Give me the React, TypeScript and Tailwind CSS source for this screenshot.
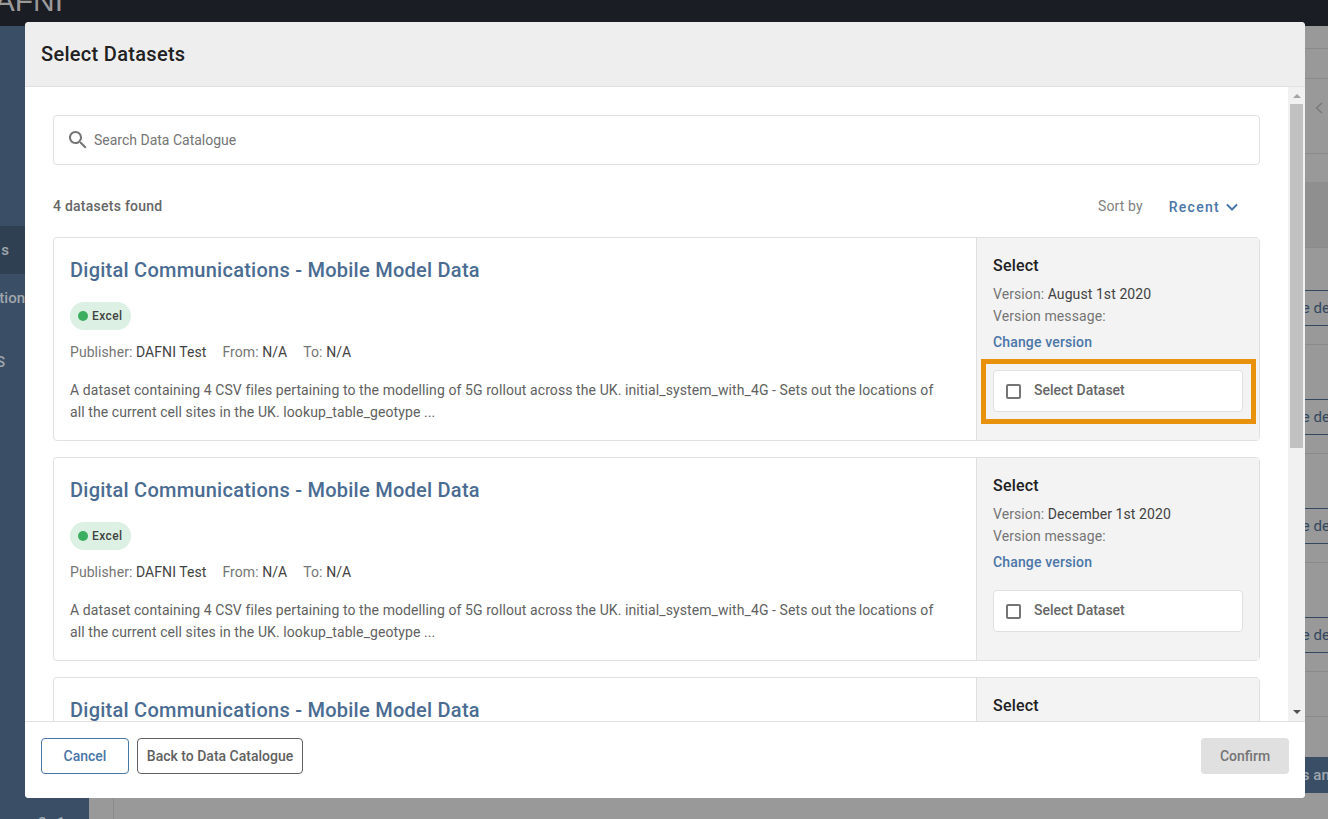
const versions = ['August 1st 2020', 'December 1st 2020', 'March 1st 2020'];

function SearchIcon() {
  return (
    <svg viewBox="0 0 24 24" className="h-6 w-6 shrink-0 fill-[#757575]">
      <path d="M15.5 14h-.79l-.28-.27C15.41 12.59 16 11.11 16 9.5 16 5.91 13.09 3 9.5 3S3 5.91 3 9.5 5.91 16 9.5 16c1.61 0 3.09-.59 4.23-1.57l.27.28v.79l5 4.99L20.49 19l-4.99-5zm-6 0C7.01 14 5 11.99 5 9.5S7.01 5 9.5 5 14 7.01 14 9.5 11.99 14 9.5 14z" />
    </svg>
  );
}

function DatasetCard({ version, highlighted }: { version: string; highlighted?: boolean }) {
  return (
    <div className="flex h-[204px] shrink-0 rounded border border-[#e0e0e0]">
      <div className="w-[922px] shrink-0 pt-[18px] pr-[30px] pl-4">
        <h2 className="text-[20px] leading-[28px] font-medium tracking-[0.25px] text-[#4a6b92]">
          Digital Communications - Mobile Model Data
        </h2>
        <div className="mt-[18px] flex h-7 w-[61px] items-center rounded-full bg-[#dcf1e3] pl-2">
          <span className="h-2.5 w-2.5 rounded-full bg-[#3cae60]" />
          <span className="ml-1 text-[12px] leading-4 font-medium tracking-[0.4px] text-[#424242]">Excel</span>
        </div>
        <div className="mt-[11px] flex h-[22px] items-center gap-4 text-[14px] tracking-[0.07px] text-[#757575]">
          <span>
            Publisher: <span className="text-[#424242]">DAFNI Test</span>
          </span>
          <span>
            From: <span className="text-[#424242]">N/A</span>
          </span>
          <span>
            To: <span className="text-[#424242]">N/A</span>
          </span>
        </div>
        <p className="mt-4 text-[14px] leading-[22px] tracking-[0.09px] text-[#616161]">
          A dataset containing 4 CSV files pertaining to the modelling of 5G rollout across the UK. initial_system_with_4G - Sets out the locations of all the current cell sites in the UK. lookup_table_geotype ...
        </p>
      </div>
      <div className="flex-1 border-l border-[#e0e0e0] bg-[#f3f3f3] pt-[17px] pr-4 pl-4">
        <h3 className="text-[16px] leading-[22px] font-medium tracking-[0.2px] text-[#212121]">Select</h3>
        <p className="mt-[6px] text-[14px] leading-[22px] tracking-[0.08px] text-[#757575]">
          Version: <span className="text-[#424242]">{version}</span>
        </p>
        <p className="text-[14px] leading-[22px] tracking-[0.1px] text-[#757575]">Version message:</p>
        <a className="mt-[4px] block text-[14px] leading-[22px] font-medium tracking-[0.15px] text-[#4a76a8]">Change version</a>
        <div className="relative mt-[17px] flex h-[42px] items-center rounded border border-[#e0e0e0] bg-white pl-[12px]">
          <span className="h-[15px] w-[15px] rounded-[2px] border-2 border-[#757575]" />
          <span className="mb-[2px] ml-[13px] text-[14px] leading-[20px] font-medium text-[#666666]">Select Dataset</span>
          {highlighted && (
            <div className="absolute -top-[12px] -right-[14px] -bottom-[13px] -left-[13px] border-[5px] border-[#e8910c]" />
          )}
        </div>
      </div>
    </div>
  );
}

function DetailsRow({ first }: { first?: boolean }) {
  return (
    <div className={first ? 'h-[97px] border-b border-[#8a8a8a] pt-[42px]' : 'h-[109px] border-b border-[#8a8a8a] pt-[54px]'}>
      <div className="ml-[1168px] h-9 w-[200px] border-y border-[#33485f] pl-[3px] text-[15px] leading-[34px] text-[#33485f]">
        See details
      </div>
    </div>
  );
}

export default function App() {
  return (
    <div className="relative h-[819px] w-[1328px] overflow-hidden bg-[#999999] font-['Roboto',sans-serif]">
      <header className="h-[26px] overflow-hidden bg-[#1a1d23]">
        <div className="-mt-[14px] -ml-[27px] font-['Liberation_Sans',sans-serif] text-[30px] leading-[30px] text-[#9a9a9a]">
          DAFNI
        </div>
      </header>
      <div className="flex h-[793px]">
        <aside className="flex w-[89px] shrink-0 flex-col overflow-hidden bg-[#3a4f66] pt-[200px] text-[15px] font-medium text-[#a0a6ad]">
          <div className="flex h-12 shrink-0 items-center justify-end bg-[#2f4053] pt-px pr-[80px]">s</div>
          <div className="flex h-12 shrink-0 items-center justify-end pr-[64px]">Publication</div>
          <div className="mt-4 flex h-12 shrink-0 items-center justify-end pr-[84px]">S</div>
          <div className="mt-[426px] shrink-0 text-center tracking-[3px]">v 2.1</div>
        </aside>
        <main className="flex-1 overflow-hidden">
          <div className="ml-6 h-full w-[1215px] border-l border-[#8a8a8a]">
            <div className="h-[23px] border-b border-[#8a8a8a]" />
            <div className="h-[30px] border-b border-[#8a8a8a]" />
            <div className="flex h-[75px] items-start justify-end border-b border-[#8a8a8a] pt-[23px] pr-[5px]">
              <svg viewBox="0 0 8 12" className="h-[12px] w-[8px] fill-none stroke-[#777777] stroke-[1.3]">
                <path d="M7 1 1.5 6 7 11" />
              </svg>
            </div>
            <div className="h-[28px]" />
            <div className="h-[66px] border-b border-[#8a8a8a] bg-[#8f8f8f]" />
            <DetailsRow first />
            <DetailsRow />
            <DetailsRow />
            <DetailsRow />
            <div className="h-[45px] border-b border-[#8a8a8a]" />
            <div className="mt-[40px] ml-[1150px] h-9 w-[200px] bg-[#3a4f66] pt-[7px] pl-[3px] text-[15px] font-medium text-[#a0a6ad]">
              Terms and
            </div>
          </div>
        </main>
      </div>

      <div className="absolute top-[22px] left-[25px] flex h-[776px] w-[1280px] flex-col overflow-hidden rounded bg-white">
        <div className="flex h-[65px] shrink-0 items-center border-b border-[#e0e0e0] bg-[#eeeeee] px-4">
          <h1 className="text-[20px] font-medium tracking-[0.3px] text-[#212121]">Select Datasets</h1>
        </div>
        <div className="flex min-h-0 flex-1">
          <div className="flex min-w-0 flex-1 flex-col overflow-hidden px-[28px] pt-[28px]">
            <div className="flex h-[50px] shrink-0 items-center rounded border border-[#e0e0e0] pl-[12px]">
              <SearchIcon />
              <span className="ml-[4px] text-[14px] text-[#757575]">Search Data Catalogue</span>
            </div>
            <div className="mt-[28px] flex h-[26px] shrink-0 items-center justify-between">
              <span className="text-[14px] font-medium tracking-[0.25px] text-[#666666]">4 datasets found</span>
              <div className="flex items-center pr-[22px]">
                <span className="text-[14px] tracking-[0.1px] text-[#808080]">Sort by</span>
                <span className="mt-[2px] ml-[26px] text-[14px] font-medium tracking-[1.3px] text-[#4a76a8]">Recent</span>
                <svg viewBox="0 0 12 8" className="mt-[2px] ml-[6px] h-2 w-3 fill-none stroke-[#4a76a8] stroke-[2]">
                  <path d="M1 1.5 6 6.5l5-5" />
                </svg>
              </div>
            </div>
            <div className="mt-[18px] flex flex-col gap-4">
              {versions.map((version, i) => (
                <DatasetCard key={i} version={version} highlighted={i === 0} />
              ))}
            </div>
          </div>
          <div className="flex w-[17px] shrink-0 flex-col items-center bg-[#f1f1f1]">
            <svg viewBox="0 0 8 4" className="mt-[7px] h-1 w-2 fill-[#a3a3a3]">
              <path d="M4 0l4 4H0z" />
            </svg>
            <div className="mt-[6px] h-[344px] w-[13px] bg-[#c1c1c1]" />
            <svg viewBox="0 0 8 4" className="mt-auto mb-[7px] h-1 w-2 fill-[#505050]">
              <path d="M0 0h8L4 4z" />
            </svg>
          </div>
        </div>
        <div className="flex h-[77px] shrink-0 items-start border-t border-[#e0e0e0] bg-white px-4 pt-4">
          <button className="h-9 w-[88px] rounded border border-[#4a76a8] text-[14px] font-medium text-[#4a76a8]">Cancel</button>
          <button className="ml-2 h-9 w-[166px] rounded border border-[#616161] text-[14px] font-medium text-[#616161]">Back to Data Catalogue</button>
          <button className="ml-auto h-9 w-[88px] rounded bg-[#e0e0e0] text-[14px] font-medium text-[#757575]">Confirm</button>
        </div>
      </div>
    </div>
  );
}
